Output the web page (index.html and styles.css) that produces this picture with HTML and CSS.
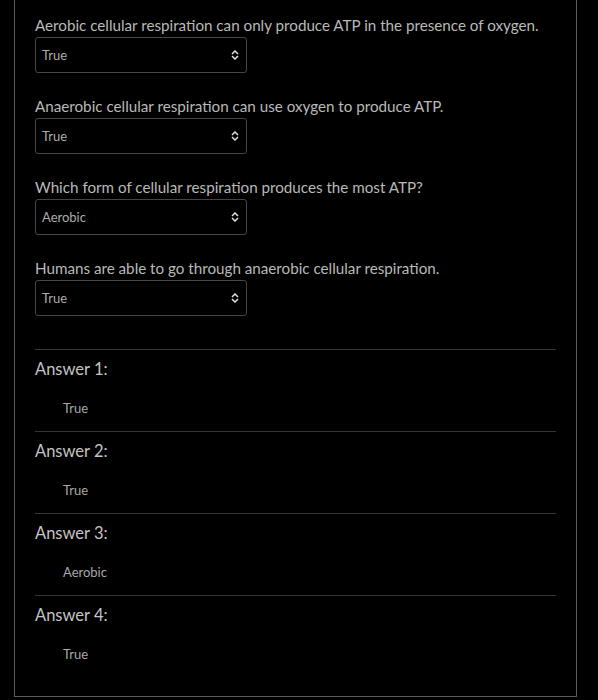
FILE: index.html
```html
<!DOCTYPE html>
<html>
<head>
<meta charset="utf-8">
<link rel="stylesheet" href="styles.css">
</head>
<body>
<div class="panel">
  <div class="question">
    <div class="q-text">Aerobic cellular respiration can only produce ATP in the presence of oxygen.</div>
    <div class="select"><span>True</span><svg class="chev" width="8" height="10" viewBox="0 0 8 10"><path d="M1 4 L4 1 L7 4 M1 6 L4 9 L7 6" fill="none" stroke="#e0e0e0" stroke-width="1.5"/></svg></div>
  </div>
  <div class="question">
    <div class="q-text">Anaerobic cellular respiration can use oxygen to produce ATP.</div>
    <div class="select"><span>True</span><svg class="chev" width="8" height="10" viewBox="0 0 8 10"><path d="M1 4 L4 1 L7 4 M1 6 L4 9 L7 6" fill="none" stroke="#e0e0e0" stroke-width="1.5"/></svg></div>
  </div>
  <div class="question">
    <div class="q-text">Which form of cellular respiration produces the most ATP?</div>
    <div class="select"><span>Aerobic</span><svg class="chev" width="8" height="10" viewBox="0 0 8 10"><path d="M1 4 L4 1 L7 4 M1 6 L4 9 L7 6" fill="none" stroke="#e0e0e0" stroke-width="1.5"/></svg></div>
  </div>
  <div class="question">
    <div class="q-text">Humans are able to go through anaerobic cellular respiration.</div>
    <div class="select"><span>True</span><svg class="chev" width="8" height="10" viewBox="0 0 8 10"><path d="M1 4 L4 1 L7 4 M1 6 L4 9 L7 6" fill="none" stroke="#e0e0e0" stroke-width="1.5"/></svg></div>
  </div>
  <div class="answers">
    <div class="answer">
      <div class="a-label">Answer 1:</div>
      <div class="a-value">True</div>
    </div>
    <div class="answer">
      <div class="a-label">Answer 2:</div>
      <div class="a-value">True</div>
    </div>
    <div class="answer">
      <div class="a-label">Answer 3:</div>
      <div class="a-value">Aerobic</div>
    </div>
    <div class="answer">
      <div class="a-label">Answer 4:</div>
      <div class="a-value">True</div>
    </div>
  </div>
</div>
</body>
</html>
```
FILE: styles.css
```css
html, body {
  margin: 0;
  padding: 0;
  background: #000;
}
body {
  font-family: Lato, "Liberation Sans", sans-serif;
  color: #c0c0c0;
  height: 700px;
  overflow: hidden;
}
.panel {
  box-sizing: border-box;
  margin-left: 14px;
  width: 563px;
  border: 1px solid #5c5c5c;
  border-top: none;
  padding: 15px 20px 33px 20px;
}
.question {
  margin-bottom: 23px;
}
.question:last-of-type {
  margin-bottom: 0;
}
.q-text {
  font-size: 15.2px;
  line-height: 20px;
  margin-bottom: 2px;
  color: #b9b9b9;
}
.select {
  box-sizing: border-box;
  width: 212px;
  height: 36px;
  border: 1px solid #454545;
  border-radius: 3px;
  display: flex;
  align-items: center;
  justify-content: space-between;
  padding: 0 7px 0 6px;
  font-size: 13px;
  color: #acacac;
}
.chev {
  display: block;
}
.answers {
  margin-top: 33px;
}
.answer {
  border-top: 1px solid #353535;
  padding-top: 9px;
  padding-bottom: 14px;
}
.answer:last-child {
  padding-bottom: 0;
}
.a-label {
  font-size: 16.5px;
  line-height: 20px;
  color: #c4c4c4;
}
.a-value {
  margin-top: 20px;
  padding-left: 28px;
  font-size: 13px;
  line-height: 18px;
  color: #a8a8a8;
}
```
